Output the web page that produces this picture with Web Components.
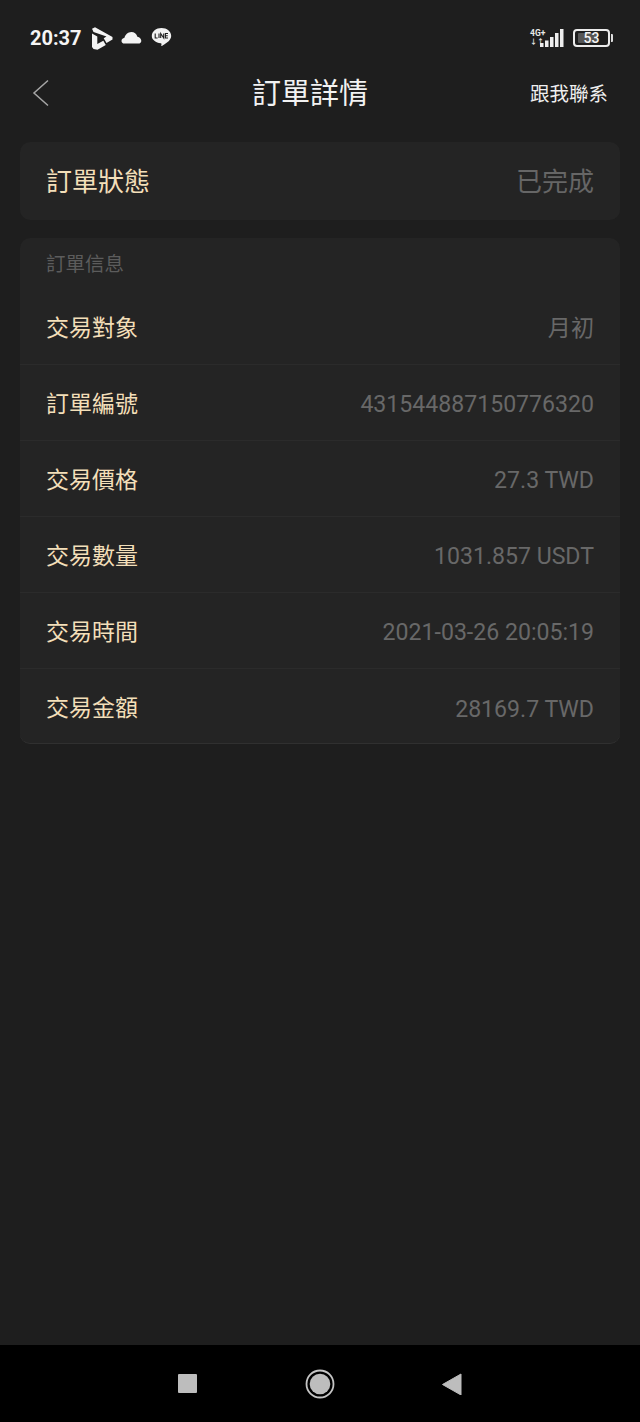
<!DOCTYPE html>
<html lang="zh-Hant"><head><meta charset="utf-8"><style>
html,body{margin:0;padding:0;background:#1e1e1e}
body{width:640px;height:1422px;font-family:Roboto,"Noto Sans CJK TC",sans-serif}
app-page{height:1422px}
</style></head><body>
<app-page>
<status-bar></status-bar>
<nav-header title-text="訂單詳情" action="跟我聯系"></nav-header>
<status-card label="訂單狀態" value="已完成"></status-card>
<info-card heading="訂單信息">
<info-row label="交易對象" value="月初"></info-row>
<info-row label="訂單編號" value="431544887150776320"></info-row>
<info-row label="交易價格" value="27.3 TWD"></info-row>
<info-row label="交易數量" value="1031.857 USDT"></info-row>
<info-row label="交易時間" value="2021-03-26 20:05:19"></info-row>
<info-row label="交易金額" value="28169.7 TWD"></info-row>
</info-card>
<system-nav></system-nav>
</app-page>
<script>
const F='Roboto,"Noto Sans CJK TC",sans-serif';
function def(name,render){customElements.define(name,class extends HTMLElement{connectedCallback(){if(this.shadowRoot)return;const s=this.attachShadow({mode:'open'});s.innerHTML=render(this)}})}
def('app-page',()=>`<style>:host{display:flex;flex-direction:column;background:#1e1e1e}::slotted(system-nav){margin-top:auto}</style><slot></slot>`);
def('status-bar',()=>`<style>
:host{display:flex;align-items:center;justify-content:space-between;height:38px;padding:19px 27px 0 30px;color:#fff;font-family:${F}}
.l,.r{display:flex;align-items:center}
.t{font-size:20px;font-weight:700;line-height:38px;color:#f5f5f5}
svg{display:block}
.net{display:flex;flex-direction:column;width:17px;font-size:8.500px;font-weight:700;line-height:10px;color:#e8e8e8;margin-top:-2px}
.io{font-size:7px;letter-spacing:0;line-height:9px}
.bw{position:relative;margin-left:9px}
.bat{box-sizing:border-box;width:37px;height:18px;border:2px solid #ececec;border-radius:4px;padding:2px 3px}
.fill{height:100%;background:#555;border-radius:1px;width:70%}
.num{position:absolute;inset:0;text-align:center;font-size:14px;font-weight:500;line-height:18px;color:#f4f4f4}
.cap{width:2px;height:8px;background:#ddd;margin-left:1px;border-radius:0 1px 1px 0}
</style>
<div class="l"><span class="t">20:37</span>
<svg style="margin-left:9px" width="22" height="23" viewBox="0 0 22 23"><path fill="#f4f4f4" d="M1 1.800 4 .3l17.500 9.800v2.500L15.500 16l-2.800-4.700 2.800-1.700L2.500 5z"/><path fill="#f4f4f4" d="M1 6.500l5.300 3v7.600l6-3.400 2.500 4.300L6.500 22.700 2.500 22 1 20z"/></svg>
<svg style="margin-left:8px" width="21" height="14" viewBox="0 0 21 14"><path fill="#f2f2f2" d="M3.500 12.600C1.500 12.600.5 11.400.5 10c0-1.500 1.100-2.700 2.800-2.900C4 3.800 7 1 10.300 1c3 0 5.300 1.800 6.100 4.700 2.300.3 3.900 2.200 3.900 4 0 1.800-1.200 2.900-3 2.900z"/></svg>
<svg style="margin-left:9px" width="21" height="22" viewBox="0 0 20 22"><path fill="#f2f2f2" d="M10 1c5.400 0 9.700 3.500 9.700 8 0 2.600-1.800 4.800-4.200 6.600-1.900 1.400-3.900 2.700-5 3.400-.6.300-.8 0-.7-.6l.2-1.500c0-.4-.2-.6-.7-.6C4.300 15.700.3 12.800.3 9 .3 4.500 4.600 1 10 1z"/><g fill="none" stroke="#1e1e1e" stroke-width="1.100"><path d="M3.700 6.500v4.500h2.400M7.500 6.500V11M9.200 11V6.500l3 4.500V6.500M16.500 6.500h-2.600V11h2.600M13.900 8.700h2.400"/></g></svg>
</div>
<div class="r">
<div class="net"><span>4G+</span><span class="io">↓↑</span></div>
<svg width="24" height="20" viewBox="0 0 24 20" style="margin-left:-7px"><path fill="#eee" d="M0 15h3.500v4H0zM5 12.500h3.500V19H5zM10 9h3.500v10H10zM15 5h3.500v14H15zM20 1h3.500v18H20z"/></svg>
<div class="bw"><div class="bat"><div class="fill"></div></div><div class="num">53</div></div><div class="cap"></div>
</div>`);
def('nav-header',h=>`<style>
:host{display:grid;grid-template-columns:1fr auto 1fr;align-items:center;height:46px;padding:13px 32px 26px 32px;font-family:${F}}
svg{display:block;margin-bottom:2px}
h1{margin:0 20px 0 0;font-size:29px;font-weight:400;color:#f2f2f2;line-height:46px;padding-top:1px}
.a{justify-self:end;font-size:19.500px;color:#efefef;padding-bottom:2px}
</style>
<svg width="18" height="28" viewBox="0 0 18 28"><path d="M16 1.500 2 14l14 12.500" fill="none" stroke="#a6a6a6" stroke-width="1.500"/></svg>
<h1>${h.getAttribute('title-text')}</h1><span class="a">${h.getAttribute('action')}</span>`);
def('status-card',h=>`<style>
:host{display:flex;align-items:center;justify-content:space-between;height:78px;margin:0 20px;padding:0 26px;background:#242424;border-radius:10px;font-family:${F}}
span{font-size:26px;padding-bottom:3px}
.l{color:#f3dfb9}.v{color:#666}
</style><span class="l">${h.getAttribute('label')}</span><span class="v">${h.getAttribute('value')}</span>`);
def('info-card',h=>`<style>
:host{display:block;margin:18px 20px 0;background:#242424;border-radius:10px;font-family:${F};border-bottom:1px solid #303030}
.h{height:51px;padding:0 26px;font-size:19.500px;line-height:53px;color:#5c5c5c}
</style><div class="h">${h.getAttribute('heading')}</div><slot></slot>`);
def('info-row',h=>`<style>
:host{display:flex;align-items:center;justify-content:space-between;height:76px;padding:0 26px;box-sizing:border-box;border-bottom:1px solid #2b2b2b}
:host(:last-child){border-bottom:0;height:74px;padding-top:2px}
.l{font-size:23px;color:#f3dfb9;padding-bottom:2px}.v{font-size:23.100px;color:#686868;padding-top:4px}
:host(:first-child) .v{padding:0 0 2px}
</style><span class="l">${h.getAttribute('label')}</span><span class="v">${h.getAttribute('value')}</span>`);
def('system-nav',()=>`<style>
:host{display:flex;align-items:center;justify-content:center;height:77px;background:#000}
.w{display:grid;grid-template-columns:20px 1fr 20px;align-items:center;justify-items:center;width:284px;margin-left:-1px}
.s{width:19px;height:19px;background:#bdbdbd;border-radius:1px}
svg{display:block}
</style><div class="w"><div class="s"></div>
<svg width="30" height="30" viewBox="0 0 30 30"><circle cx="15" cy="15" r="13.500" fill="none" stroke="#c4c4c4" stroke-width="1.800"/><circle cx="15" cy="15" r="10.300" fill="#bdbdbd"/></svg>
<svg width="20" height="22" viewBox="0 0 20 22"><path d="M19 1v21L.5 11.500z" fill="#bdbdbd" stroke="#bdbdbd" stroke-linejoin="round"/></svg></div>`);
</script>
</body></html>
